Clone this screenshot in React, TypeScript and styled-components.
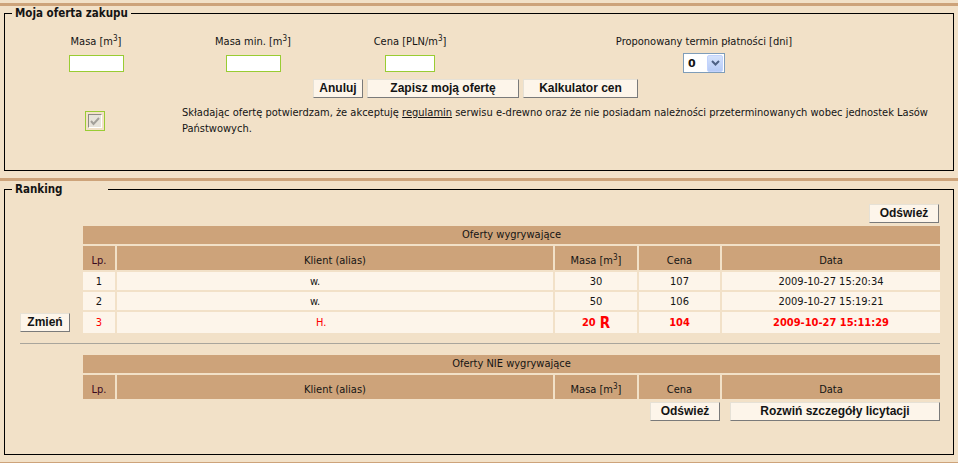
import React from 'react';
import styled, { createGlobalStyle } from 'styled-components';

const C = {
  bg: '#F2E1C8',
  tan: '#CDA37A',
  row: '#FDF5EA',
  text: '#141414',
  red: '#FF0000',
  green: '#99CC33',
};

const Global = createGlobalStyle`
  html, body { margin: 0; padding: 0; background: ${C.bg}; }
  body {
    font-family: "DejaVu Sans Condensed", "DejaVu Sans", sans-serif;
    font-size: 11px;
    color: ${C.text};
  }
  #root { height: 463px; overflow: hidden; }
  * { box-sizing: border-box; }
`;

const Page = styled.div`
  padding-top: 3px;
`;

const Bar = styled.div`
  height: 3px;
  background: ${C.tan};
`;

const Frame = styled.fieldset<{ $mt: number }>`
  margin: ${(p) => p.$mt}px 4px 7px 4px;
  padding: 0;
  border: 1px solid #000;
  min-width: 0;
`;

const Legend = styled.legend<{ $w?: number }>`
  margin-left: 7px;
  padding: 0 3px;
  font-weight: bold;
  font-size: 11.5px;
  line-height: 14px;
  ${(p) => (p.$w ? `width: ${p.$w}px;` : '')}
`;

/* ---------- offer form ---------- */

const FormGrid = styled.div`
  display: grid;
  grid-template-columns: 152px 162px 152px 436px;
  grid-template-rows: 14px 20px;
  row-gap: 4px;
  padding: 15px 0 0 15px;
  justify-items: center;
  align-items: center;
`;

const Label = styled.div`
  line-height: 14px;
  white-space: nowrap;
`;

const Sup = styled.sup`
  font-size: 8px;
  line-height: 0;
  vertical-align: 4px;
`;

const TextInput = styled.div<{ $w: number }>`
  width: ${(p) => p.$w}px;
  height: 17px;
  background: #fff;
  border: 1px solid ${C.green};
`;

const SelectBox = styled.div`
  width: 42px;
  height: 20px;
  background: #fff;
  border: 1px solid #7f9db9;
  display: flex;
  align-items: center;
  justify-content: space-between;
  padding: 0 1px 0 4px;
  font-weight: bold;
  font-family: "DejaVu Sans", sans-serif;
  font-size: 11px;
`;

const SelectArrow = styled.div`
  width: 16px;
  height: 17px;
  border-radius: 2px;
  background: linear-gradient(#d5e2fc, #b6cbf6);
  border: 1px solid #c3d3fd;
  display: flex;
  align-items: center;
  justify-content: center;
`;

const ButtonRow = styled.div<{ $pl?: number; $end?: boolean; $gap: number }>`
  display: flex;
  gap: ${(p) => p.$gap}px;
  ${(p) => (p.$pl ? `padding-left: ${p.$pl}px;` : '')}
  ${(p) => (p.$end ? 'justify-content: flex-end;' : '')}
`;

const Btn = styled.button<{ $w: number }>`
  width: ${(p) => p.$w}px;
  height: 19px;
  padding: 0;
  background: ${C.row};
  border: 1px solid;
  border-color: #e6e1d6 #7a7a7a #7a7a7a #e6e1d6;
  font-family: "Liberation Sans", Arial, sans-serif;
  font-weight: bold;
  font-size: 12px;
  color: ${C.text};
  line-height: 17px;
  cursor: pointer;
`;

const FormButtons = styled(ButtonRow)`
  margin-top: 6px;
`;

const AgreeRow = styled.div`
  display: grid;
  grid-template-columns: 157px 1fr;
  align-items: center;
  margin-top: 7px;
  padding: 0 0 33px 15px;
`;

const CheckWrap = styled.div`
  justify-self: center;
  margin-left: -8px;
  width: 20px;
  height: 20px;
  border: 1px solid ${C.green};
  display: flex;
  align-items: center;
  justify-content: center;
`;

const CheckInner = styled.div`
  width: 14px;
  height: 14px;
  border: 1px solid;
  border-color: #8d8b84 #ffffff #ffffff #8d8b84;
  background: #e7e3da;
  display: flex;
  align-items: center;
  justify-content: center;
`;

const AgreeText = styled.div`
  line-height: 16px;
  padding-left: 5px;
  white-space: nowrap;
`;

const Link = styled.span`
  text-decoration: underline;
`;

/* ---------- ranking ---------- */

const RankBody = styled.div`
  padding: 8px 13px 33px 15px;
`;

const TopBar = styled.div`
  display: flex;
  justify-content: flex-end;
  padding-right: 1px;
  margin-bottom: 3px;
`;

const MainRow = styled.div`
  display: flex;
`;

const SideCol = styled.div`
  width: 63px;
  display: flex;
  align-items: flex-end;
  padding-bottom: 1px;
`;

const Table = styled.div`
  display: grid;
  grid-template-columns: 32px 436px 82px 81px 218px;
  gap: 2px;
`;

const Indented = styled.div`
  margin-left: 63px;
`;

const Title = styled.div`
  grid-column: 1 / -1;
  height: 18px;
  background: ${C.tan};
  text-align: center;
  line-height: 18px;
`;

const Head = styled.div<{ $h: number; $dark?: boolean }>`
  height: ${(p) => p.$h}px;
  background: ${C.tan};
  text-align: center;
  padding-top: ${(p) => p.$h - 16}px;
  line-height: 14px;
  ${(p) => (p.$dark ? 'color: #3a0a1e;' : '')}
`;

const Cell = styled.div<{ $h: number; $red?: boolean; $bold?: boolean; $indent?: number }>`
  height: ${(p) => p.$h}px;
  background: ${C.row};
  display: flex;
  align-items: center;
  justify-content: ${(p) => (p.$indent ? 'flex-start' : 'center')};
  ${(p) => (p.$indent ? `padding-left: ${p.$indent}px;` : '')}
  color: ${(p) => (p.$red ? C.red : C.text)};
  font-weight: ${(p) => (p.$bold ? 'bold' : 'normal')};
  white-space: nowrap;
`;

const BigR = styled.span`
  font-size: 15px;
  margin-left: 4px;
`;

const Sep = styled.div`
  height: 1px;
  background: #a9a59c;
  margin: 10px 0 11px;
`;

const BottomButtons = styled(ButtonRow)`
  margin-top: 3px;
`;

const M3 = () => (
  <>
    [m<Sup>3</Sup>]
  </>
);

type Row = { lp: string; alias: string; indent: number; masa: string; cena: string; data: string; red?: boolean };

const rows: Row[] = [
  { lp: '1', alias: 'w.', indent: 193, masa: '30', cena: '107', data: '2009-10-27 15:20:34' },
  { lp: '2', alias: 'w.', indent: 193, masa: '50', cena: '106', data: '2009-10-27 15:19:21' },
  { lp: '3', alias: 'H.', indent: 199, masa: '20', cena: '104', data: '2009-10-27 15:11:29', red: true },
];

const HeaderCells = () => (
  <>
    <Head $h={24} $dark>Lp.</Head>
    <Head $h={24}>Klient (alias)</Head>
    <Head $h={24}>
      Masa <M3 />
    </Head>
    <Head $h={24}>Cena</Head>
    <Head $h={24}>Data</Head>
  </>
);

const Chevron = () => (
  <svg width="9" height="6" viewBox="0 0 9 6">
    <path d="M1 1 L4.5 4.5 L8 1" fill="none" stroke="#4d6185" strokeWidth="2" />
  </svg>
);

const CheckMark = () => (
  <svg width="10" height="9" viewBox="0 0 10 9">
    <path d="M1 4 L3.5 7 L9 1" fill="none" stroke="#a3a09a" strokeWidth="2" />
  </svg>
);

export default function App() {
  return (
    <Page>
      <Global />
      <Bar />
      <Frame $mt={0}>
        <Legend>Moja oferta zakupu</Legend>
        <FormGrid>
          <Label>
            Masa <M3 />
          </Label>
          <Label>
            Masa min. <M3 />
          </Label>
          <Label>
            Cena [PLN/m<Sup>3</Sup>]
          </Label>
          <Label>Proponowany termin płatności [dni]</Label>
          <TextInput $w={55} />
          <TextInput $w={55} />
          <TextInput $w={50} />
          <SelectBox>
            0
            <SelectArrow>
              <Chevron />
            </SelectArrow>
          </SelectBox>
        </FormGrid>
        <FormButtons $gap={4} $pl={308}>
          <Btn $w={50}>Anuluj</Btn>
          <Btn $w={152}>Zapisz moją ofertę</Btn>
          <Btn $w={115}>Kalkulator cen</Btn>
        </FormButtons>
        <AgreeRow>
          <CheckWrap>
            <CheckInner>
              <CheckMark />
            </CheckInner>
          </CheckWrap>
          <AgreeText>
            Składając ofertę potwierdzam, że akceptuję <Link>regulamin</Link> serwisu e-drewno oraz że nie posiadam
            należności przeterminowanych wobec jednostek Lasów
            <br />
            Państwowych.
          </AgreeText>
        </AgreeRow>
      </Frame>
      <Bar />
      <Frame $mt={1}>
        <Legend $w={96}>Ranking</Legend>
        <RankBody>
          <TopBar>
            <Btn $w={70}>Odśwież</Btn>
          </TopBar>
          <MainRow>
            <SideCol>
              <Btn $w={50}>Zmień</Btn>
            </SideCol>
            <Table>
              <Title>Oferty wygrywające</Title>
              <HeaderCells />
              {rows.map((r) => {
                const h = r.red ? 21 : 18;
                return (
                  <React.Fragment key={r.lp}>
                    <Cell $h={h} $red={r.red}>{r.lp}</Cell>
                    <Cell $h={h} $red={r.red} $indent={r.indent}>{r.alias}</Cell>
                    <Cell $h={h} $red={r.red} $bold={r.red}>
                      {r.masa}
                      {r.red && <BigR>R</BigR>}
                    </Cell>
                    <Cell $h={h} $red={r.red} $bold={r.red}>{r.cena}</Cell>
                    <Cell $h={h} $red={r.red} $bold={r.red}>{r.data}</Cell>
                  </React.Fragment>
                );
              })}
            </Table>
          </MainRow>
          <Sep />
          <Indented>
            <Table>
              <Title>Oferty NIE wygrywające</Title>
              <HeaderCells />
            </Table>
          </Indented>
          <BottomButtons $gap={10} $end>
            <Btn $w={70}>Odśwież</Btn>
            <Btn $w={210}>Rozwiń szczegóły licytacji</Btn>
          </BottomButtons>
        </RankBody>
      </Frame>
      <Bar />
    </Page>
  );
}
